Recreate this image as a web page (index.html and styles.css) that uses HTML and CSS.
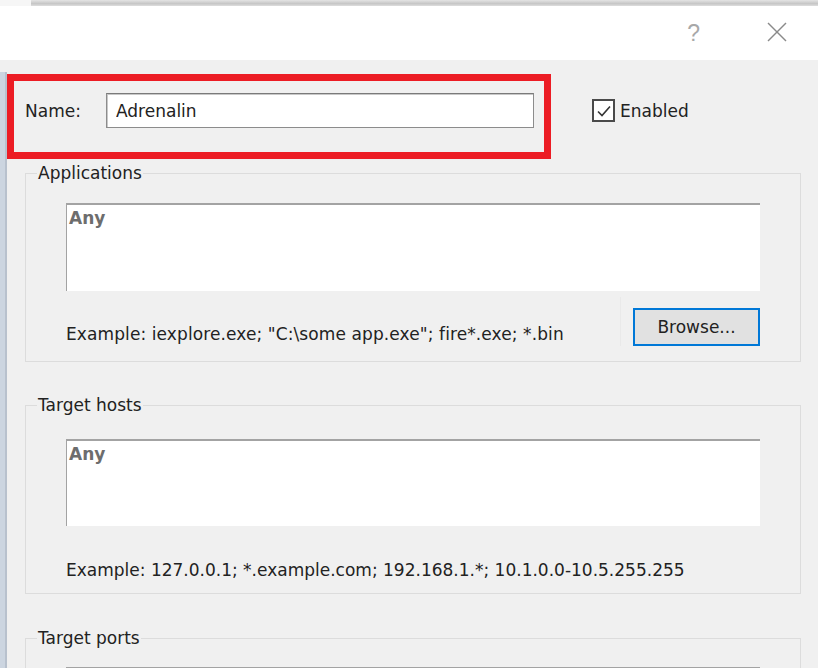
FILE: index.html
```html
<!DOCTYPE html>
<html lang="en">
<head>
    <meta charset="UTF-8">
    <title>Proxification Rule</title>
    <link rel="stylesheet" href="styles.css">
</head>
<body>

    <!-- strip of the window behind -->
    <div class="top-strip">
        <div class="top-strip-left"></div>
        <div class="top-strip-bar"></div>
    </div>

    <!-- Title bar -->
    <div class="titlebar">
        <span class="help">?</span>
        <svg class="close" width="22" height="22" viewBox="0 0 22 22">
            <line x1="2" y1="2" x2="20" y2="20" stroke="#8a8a8a" stroke-width="1.4"/>
            <line x1="20" y1="2" x2="2" y2="20" stroke="#8a8a8a" stroke-width="1.4"/>
        </svg>
    </div>

    <div class="dialog">
        <div class="edge"></div>

        <div class="main">
            <!-- Name + Enabled -->
            <div class="name-row">
                <div class="highlight">
                    <label class="name-label" for="ruleName">Name:</label>
                    <input class="name-input" id="ruleName" type="text" value="Adrenalin">
                </div>
                <label class="enabled">
                    <span class="checkbox">
                        <svg width="18" height="18" viewBox="0 0 18 18">
                            <polyline points="3,9.5 7,13.5 15,4.5" fill="none" stroke="#333" stroke-width="1.6"/>
                        </svg>
                    </span>
                    Enabled
                </label>
            </div>

            <!-- Applications -->
            <fieldset class="group">
                <legend>Applications</legend>
                <div class="list-box">Any</div>
                <div class="example-row">
                    <span class="example">Example: iexplore.exe; "C:\some app.exe"; fire*.exe; *.bin</span>
                    <div class="browse-wrap">
                        <button class="browse">Browse...</button>
                    </div>
                </div>
            </fieldset>

            <!-- Target hosts -->
            <fieldset class="group group-hosts">
                <legend>Target hosts</legend>
                <div class="list-box">Any</div>
                <div class="example-row">
                    <span class="example">Example: 127.0.0.1; *.example.com; 192.168.1.*; 10.1.0.0-10.5.255.255</span>
                </div>
            </fieldset>

            <!-- Target ports -->
            <fieldset class="group group-ports">
                <legend>Target ports</legend>
                <div class="list-box"></div>
            </fieldset>
        </div>
    </div>

</body>
</html>
```

FILE: styles.css
```css
* {
    box-sizing: border-box;
    margin: 0;
    padding: 0;
}

body {
    font-family: "DejaVu Sans", Verdana, sans-serif;
    font-size: 17px;
    color: #222;
    background-color: #f0f0f0;
    width: 818px;
    height: 668px;
    overflow: hidden;
}

.top-strip {
    display: flex;
    height: 6px;
    background-color: #fff;
}

.top-strip-left {
    width: 31px;
    background-color: #f6f6f6;
}

.top-strip-bar {
    flex: 1;
    background: linear-gradient(#e4e4e4, #c6c6c6 60%, #dedede);
}

.titlebar {
    display: flex;
    align-items: center;
    justify-content: flex-end;
    height: 54px;
    background-color: #fff;
    padding-right: 30px;
}

.help {
    font-family: "Liberation Sans", Arial, sans-serif;
    font-size: 23px;
    color: #a8a8a8;
    margin-right: 66px;
}

.close {
    display: block;
    margin-top: -2px;
}

.dialog {
    display: flex;
    height: 608px;
    overflow: hidden;
    padding-top: 12px;
}

.edge {
    width: 7px;
    background-color: #ccd5e0;
    border-right: 2px solid #b8c1cd;
}

.main {
    flex: 1;
    padding-top: 2px;
}

.name-row {
    display: flex;
    align-items: flex-start;
}

.highlight {
    display: flex;
    align-items: flex-start;
    width: 544px;
    height: 85px;
    border: 7px solid #ec1c24;
    padding: 12px 0 0 11px;
}

.name-label {
    line-height: 36px;
    width: 81px;
}

.name-input {
    width: 428px;
    height: 35px;
    font-family: inherit;
    font-size: 17px;
    color: #222;
    padding: 1px 9px 0;
    border: 1px solid #8c8c8c;
    border-top-color: #7a7a7a;
    box-shadow: inset 1px 1px 0 #c8c8c8;
    background-color: #fff;
    outline: none;
}

.enabled {
    display: flex;
    align-items: center;
    margin: 25px 0 0 41px;
}

.checkbox {
    display: flex;
    align-items: center;
    justify-content: center;
    width: 23px;
    height: 23px;
    border: 2px solid #4a4a4a;
    background-color: #fff;
    margin-right: 5px;
}

.group {
    width: 776px;
    margin: 3px 0 0 18px;
    padding: 19px 40px 15px 40px;
    border: 1px solid #dcdcdc;
}

.group legend {
    line-height: 22px;
    padding: 0 1px;
    margin-left: -29px;
}

.group-hosts {
    margin-top: 32px;
    padding-top: 23px;
    padding-bottom: 11px;
}

.group-ports {
    margin-top: 33px;
    padding-top: 18px;
    height: 80px;
}

.list-box {
    width: 694px;
    height: 88px;
    background-color: #fff;
    border-top: 2px solid #a3a3a3;
    border-left: 1px solid #a3a3a3;
    padding: 2px 0 0 2px;
    font-size: 17px;
    font-weight: bold;
    color: #6d6d6d;
    line-height: 22px;
}

.group-hosts .list-box {
    height: 87px;
}

.example-row {
    display: flex;
    align-items: flex-end;
    justify-content: space-between;
    width: 694px;
}

.example {
    line-height: 22px;
    margin-bottom: 1px;
    letter-spacing: 0.1px;
}

.group-hosts .example {
    margin-top: 33px;
    letter-spacing: 0;
}

.browse-wrap {
    padding: 11px 0 0 12px;
    margin-top: 6px;
    border-left: 1px solid #e9e9e9;
}

.browse {
    display: block;
    width: 127px;
    height: 38px;
    font-family: inherit;
    font-size: 17px;
    color: #222;
    background-color: #e1e1e1;
    border: 2px solid #0078d7;
    box-shadow: inset 0 0 0 1px #e1e1e1;
}
```
